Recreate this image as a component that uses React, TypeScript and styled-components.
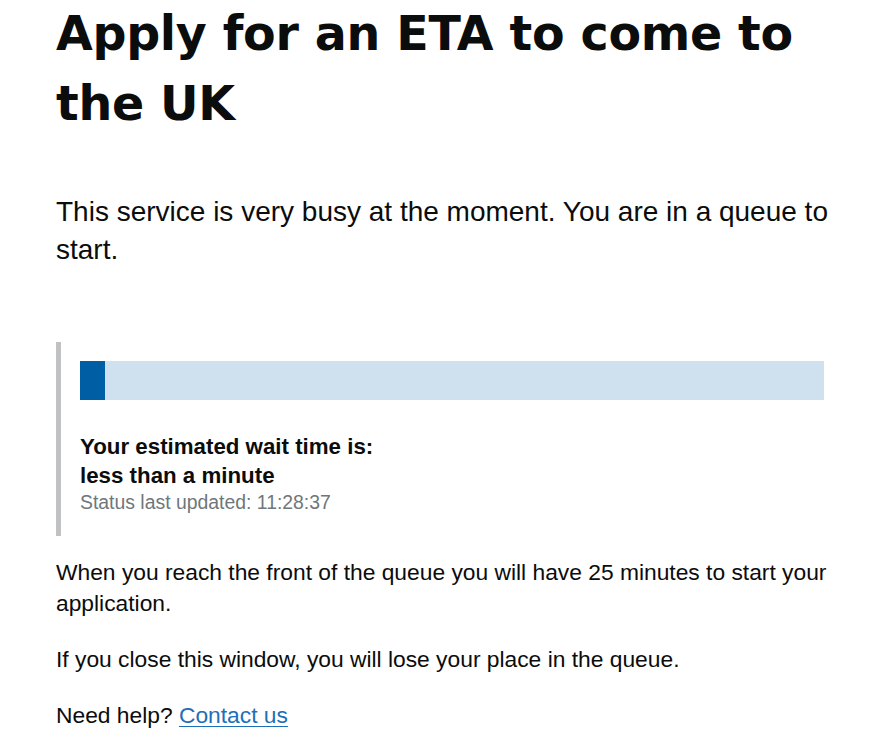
import React from "react";
import styled, { createGlobalStyle } from "styled-components";

const GlobalStyle = createGlobalStyle`
  html, body {
    margin: 0;
    padding: 0;
    background: #ffffff;
  }
  body {
    font-family: "Liberation Sans", Arial, sans-serif;
    color: #0b0c0c;
  }
`;

const Page = styled.main`
  padding: 0 20px 0 56px;
  max-width: 870px;
  box-sizing: border-box;
`;

const Heading = styled.h1`
  margin: -1px 0 0;
  font-family: "DejaVu Sans", "Liberation Sans", sans-serif;
  font-size: 47.5px;
  line-height: 70px;
  font-weight: 700;
  letter-spacing: -0.3px;
`;

const Lead = styled.p`
  margin: 54px 0 0;
  font-size: 28px;
  line-height: 38px;
`;

const Inset = styled.section`
  margin-top: 73px;
  border-left: 5px solid #bfc1c3;
  padding: 19px 26px 22px 19px;
`;

const Track = styled.div`
  height: 39px;
  background: #cfe0ee;
  display: flex;
`;

const Fill = styled.div`
  background: #005ea5;
  height: 100%;
`;

const WaitTitle = styled.p`
  margin: 32px 0 0;
  font-size: 22.3px;
  line-height: 29px;
  font-weight: 700;
`;

const Status = styled.p`
  margin: 0;
  font-size: 19.4px;
  line-height: 24px;
  color: #6f777b;
`;

const Body = styled.p`
  margin: 21px 0 0;
  font-size: 22.8px;
  line-height: 31px;
  & + & {
    margin-top: 25px;
  }
`;

const Link = styled.a`
  color: #1d70b8;
  text-decoration: underline;
  text-decoration-thickness: 1px;
  text-underline-offset: 3px;
`;

const progress = 3.4;

export default function App() {
  return (
    <>
      <GlobalStyle />
      <Page>
        <Heading>Apply for an ETA to come to the UK</Heading>
        <Lead>
          This service is very busy at the moment. You are in a queue to
          start.
        </Lead>
        <Inset>
          <Track>
            <Fill style={{ width: `${progress}%` }} />
          </Track>
          <WaitTitle>
            Your estimated wait time is:
            <br />
            less than a minute
          </WaitTitle>
          <Status>Status last updated: 11:28:37</Status>
        </Inset>
        <Body>
          When you reach the front of the queue you will have 25 minutes to
          start your application.
        </Body>
        <Body>If you close this window, you will lose your place in the queue.</Body>
        <Body>
          Need help? <Link href="#">Contact us</Link>
        </Body>
      </Page>
    </>
  );
}
